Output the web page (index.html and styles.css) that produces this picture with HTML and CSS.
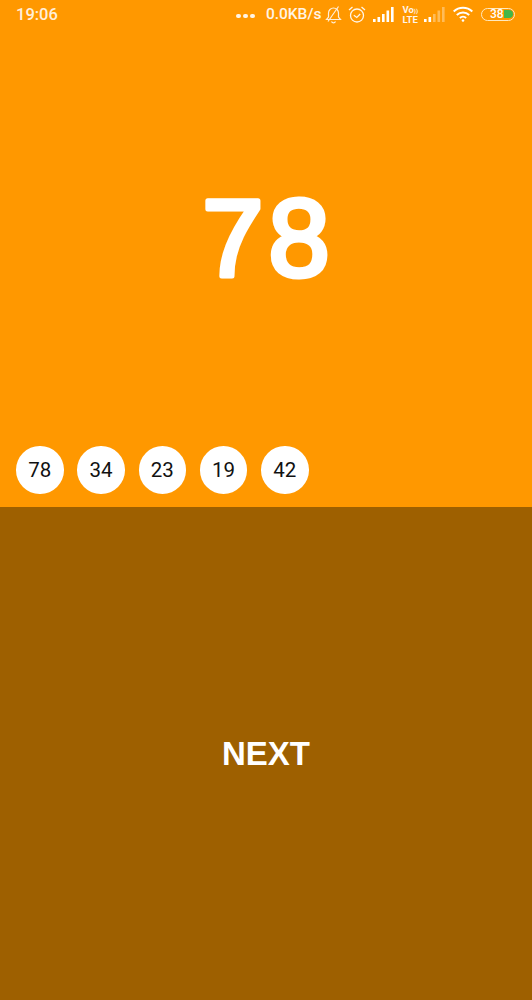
FILE: index.html
```html
<!DOCTYPE html>
<html lang="en">
<head>
    <meta charset="UTF-8">
    <meta name="viewport" content="width=device-width, initial-scale=1.0">
    <title>Next number</title>
    <link rel="stylesheet" href="styles.css">
</head>
<body>
    <div class="top">
        <div class="statusbar">
            <span class="time">19:06</span>
            <div class="status-right">
                <span class="dots"><i></i><i></i><i></i></span>
                <span class="speed">0.0KB/s</span>
                <!-- muted bell -->
                <svg class="icon bell" width="17" height="19" viewBox="0 0 17 19" fill="none" stroke="#fff" stroke-width="1.2" opacity="0.85">
                    <path d="M1.5 14.5h14l-2-2.4V8A5 5 0 0 0 8.5 3 5 5 0 0 0 3.5 8v4.100z"/>
                    <path d="M6.500 16.500a2.200 2.200 0 0 0 4 0"/>
                    <path d="M13.500 1.500L3 16.500"/>
                </svg>
                <!-- alarm -->
                <svg class="icon alarm" width="18" height="19" viewBox="0 0 18 19" fill="none" stroke="#fff" stroke-width="1.300" opacity="0.9">
                    <circle cx="9" cy="10.500" r="6.500"/>
                    <path d="M5.800 10.200l3 2.300 3.400-3.500"/>
                    <path d="M1 5l3.500-3M17 5l-3.500-3"/>
                </svg>
                <!-- signal -->
                <svg class="icon signal" width="21" height="15" viewBox="0 0 21 15" fill="#fff">
                    <rect x="0" y="12" width="2.600" height="3"/>
                    <rect x="4.500" y="10" width="2.600" height="5"/>
                    <rect x="9" y="7" width="2.600" height="8"/>
                    <rect x="13.500" y="3.500" width="2.600" height="11.500"/>
                    <rect x="18" y="0" width="2.600" height="15"/>
                </svg>
                <span class="volte"><span>Vo<small>))</small></span><span>LTE</span></span>
                <!-- signal, second sim -->
                <svg class="icon signal-2" width="21" height="15" viewBox="0 0 21 15" fill="#fff">
                    <rect x="0" y="12" width="2.600" height="3"/>
                    <rect x="4.500" y="10" width="2.600" height="5"/>
                    <g opacity="0.35">
                        <rect x="9" y="7" width="2.600" height="8"/>
                        <rect x="13.500" y="3.500" width="2.600" height="11.500"/>
                        <rect x="18" y="0" width="2.600" height="15"/>
                    </g>
                </svg>
                <!-- wifi -->
                <svg class="icon wifi" width="20" height="16" viewBox="0 0 20 16" fill="none" stroke="#fff" stroke-width="2">
                    <path d="M0.700 5.500a13.500 13.500 0 0 1 18.600 0"/>
                    <path d="M3.800 9a9 9 0 0 1 12.400 0"/>
                    <path d="M6.900 12a4.500 4.500 0 0 1 6.200 0"/>
                    <circle cx="10" cy="14.500" r="1.300" fill="#fff" stroke="none"/>
                </svg>
                <span class="battery"><span class="battery-num">38</span><span class="battery-fill"></span></span>
            </div>
        </div>

        <svg class="big-number" width="532" height="140" viewBox="0 0 532 140">
            <text x="268.500" y="106" text-anchor="middle">78</text>
        </svg>

        <div class="history">
            <div class="ball">78</div>
            <div class="ball">34</div>
            <div class="ball">23</div>
            <div class="ball">19</div>
            <div class="ball">42</div>
        </div>
    </div>

    <div class="next">NEXT</div>
</body>
</html>
```

FILE: styles.css
```css
html, body {
    height: 100%;
}
body {
    margin: 0;
    display: flex;
    flex-direction: column;
    font-family: Roboto, sans-serif;
    background-color: #9e6000;
    overflow: hidden;
}
.top {
    height: 507px;
    display: flex;
    flex-direction: column;
    background-color: #ff9800;
}
.statusbar {
    height: 28px;
    padding: 0 17px 0 16px;
    display: flex;
    align-items: center;
    justify-content: space-between;
    color: #fff;
    box-sizing: border-box;
}
.time {
    font-size: 16.5px;
    font-weight: 500;
    opacity: 0.85;
}
.status-right {
    display: flex;
    align-items: center;
}
.icon {
    display: block;
}
.dots {
    display: flex;
    gap: 2.500px;
    margin-top: 4px;
}
.dots i {
    width: 4.500px;
    height: 4.500px;
    border-radius: 50%;
    background-color: #fff;
    opacity: 0.9;
}
.speed {
    font-size: 15.500px;
    font-weight: 500;
    margin-left: 11px;
    opacity: 0.9;
}
.bell {
    margin-left: 4px;
}
.alarm {
    margin-left: 6px;
}
.signal {
    margin-left: 7px;
}
.volte {
    display: flex;
    flex-direction: column;
    margin-left: 8px;
    font-size: 9.500px;
    line-height: 9px;
    font-weight: 700;
    opacity: 0.9;
}
.volte small {
    font-size: 6px;
}
.signal-2 {
    margin-left: 6px;
}
.wifi {
    margin-left: 8px;
}
.battery {
    width: 34px;
    height: 13px;
    margin-left: 8px;
    box-sizing: border-box;
    border: 1.500px solid #ffe9bf;
    border-radius: 7px;
    display: flex;
    align-items: center;
    position: relative;
}
.battery-num {
    font-size: 12px;
    font-weight: 500;
    margin-left: 8px;
    position: relative;
    z-index: 1;
}
.battery-fill {
    width: 9px;
    height: 8px;
    border-radius: 0 4px 4px 0;
    background-color: #43b649;
    position: absolute;
    right: 1px;
    top: 1px;
}
.big-number {
    display: block;
    margin-top: 142px;
}
.big-number text {
    font-family: "Liberation Sans", sans-serif;
    font-size: 110px;
    letter-spacing: 5px;
    fill: #fff;
    stroke: #fff;
    stroke-width: 5px;
    stroke-linejoin: round;
    stroke-linecap: round;
}
.history {
    margin-top: auto;
    padding: 0 16px 13.500px;
    display: flex;
    gap: 13.750px;
}
.ball {
    width: 47.500px;
    height: 47.500px;
    border-radius: 50%;
    background-color: #fff;
    color: #111;
    font-size: 20.500px;
    display: flex;
    align-items: center;
    justify-content: center;
}
.next {
    flex: 1;
    display: flex;
    align-items: center;
    justify-content: center;
    color: #fff;
    font-family: "Liberation Sans", sans-serif;
    font-size: 33px;
    font-weight: 700;
}
```
